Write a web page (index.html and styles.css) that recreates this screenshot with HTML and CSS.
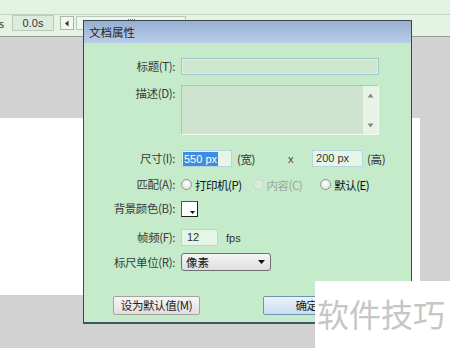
FILE: index.html
```html
<!DOCTYPE html>
<html>
<head>
<meta charset="utf-8">
<link rel="stylesheet" href="styles.css">
</head>
<body>
<div class="app">
  <div class="topstrip"></div>
  <div class="toolbar">
    <span class="tb-s">s</span>
    <span class="tb-time">0.0s</span>
    <span class="tb-arrow"><svg width="6" height="7" viewBox="0 0 6 7"><path d="M4.5 0.5 L1 3.5 L4.5 6.5 Z" fill="#333"/></svg></span>
    <span class="tb-track"><span class="grip"></span></span>
  </div>
  <div class="stage"></div>

  <div class="dialog">
    <div class="titlebar">文档属性</div>
    <div class="body">
      <div class="row r1">
        <span class="lbl">标题(T):</span>
        <span class="field f-title"></span>
      </div>
      <div class="row r2 top">
        <span class="lbl">描述(D):</span>
        <span class="textarea">
          <span class="vscroll">
            <svg width="7" height="5" viewBox="0 0 7 5"><path d="M0.5 4.5 L3.5 0.5 L6.5 4.5 Z" fill="#8a8a8a"/></svg>
            <svg width="7" height="5" viewBox="0 0 7 5"><path d="M0.5 0.5 L3.5 4.5 L6.5 0.5 Z" fill="#8a8a8a"/></svg>
          </span>
        </span>
      </div>
      <div class="row r3">
        <span class="lbl">尺寸(I):</span>
        <span class="field f-w"><span class="sel">550 px</span></span>
        <span class="unit u-w">(宽)</span>
        <span class="times">x</span>
        <span class="field f-h">200 px</span>
        <span class="unit u-h">(高)</span>
      </div>
      <div class="row r4">
        <span class="lbl">匹配(A):</span>
        <span class="radio"></span>
        <span class="opt">打印机(P)</span>
        <span class="radio disabled"></span>
        <span class="opt dis">内容(C)</span>
        <span class="radio r-def"></span>
        <span class="opt">默认(E)</span>
      </div>
      <div class="row r5">
        <span class="lbl">背景颜色(B):</span>
        <span class="swatch"><svg width="5" height="3" viewBox="0 0 5 3"><path d="M0 0 L5 0 L2.5 3 Z" fill="#111"/></svg></span>
      </div>
      <div class="row r6">
        <span class="lbl">帧频(F):</span>
        <span class="field f-fps">12</span>
        <span class="fps">fps</span>
      </div>
      <div class="row r7">
        <span class="lbl">标尺单位(R):</span>
        <span class="select"><span class="sel-text">像素</span><svg width="7" height="4" viewBox="0 0 7 4"><path d="M0 0 L7 0 L3.5 4 Z" fill="#111"/></svg></span>
      </div>
      <div class="buttons">
        <span class="btn btn-def">设为默认值(M)</span>
        <span class="btn btn-ok">确定</span>
      </div>
    </div>
  </div>

  <div class="watermark">软件技巧</div>
</div>
</body>
</html>
```

FILE: styles.css
```css
html, body {
  margin: 0;
  padding: 0;
}
body {
  font-family: "Noto Sans CJK SC", "Noto Sans", sans-serif;
  font-size: 12px;
  color: #333;
}
.app {
  position: relative;
  width: 450px;
  height: 348px;
  overflow: hidden;
  background: #d2d2d2;
}
.topstrip {
  height: 14px;
  background: #e3f3e3;
  border-bottom: 1px solid #c2d2c2;
}
.toolbar {
  height: 21px;
  background: #e4f4e4;
  border-bottom: 1px solid #8f9f93;
  display: flex;
  align-items: flex-start;
}
.tb-s {
  width: 13px;
  font-size: 11px;
  line-height: 16px;
  color: #444;
  margin-left: -1px;
}
.tb-time {
  box-sizing: border-box;
  width: 42px;
  height: 16px;
  border: 1px solid #bccabc;
  background: #dcecdc;
  font-family: "Liberation Sans", sans-serif;
  font-size: 11px;
  line-height: 14px;
  text-align: center;
  color: #333;
}
.tb-arrow {
  box-sizing: border-box;
  margin-left: 6px;
  margin-top: 1px;
  width: 14px;
  height: 14px;
  border: 1px solid #aab8aa;
  background: #f2f7f2;
  display: flex;
  align-items: center;
  justify-content: center;
}
.tb-track {
  box-sizing: border-box;
  margin-left: 2px;
  margin-top: 1px;
  width: 110px;
  height: 14px;
  border: 1px solid #bac8ba;
  background: #eef6ee;
  position: relative;
}
.grip {
  position: absolute;
  left: 51px;
  top: 2px;
  width: 7px;
  height: 1px;
  border-top: 1px dotted #777;
}
.stage {
  margin-top: 81px;
  width: 420px;
  height: 177px;
  background: #ffffff;
}

/* dialog window */
.dialog {
  position: absolute;
  left: 83px;
  top: 20px;
  width: 329px;
  height: 304px;
  box-sizing: border-box;
  border: 1px solid #3a464c;
  border-bottom: 2px solid #3d5866;
  background: #c6ebcb;
}
.titlebar {
  height: 22px;
  background: linear-gradient(#97afd2, #b8cde8);
  padding-left: 5px;
  font-size: 11.5px;
  line-height: 22px;
  color: #1e1e1e;
}
.body {
  padding-top: 15px;
}
.row {
  display: flex;
  align-items: center;
}
.row.top {
  align-items: flex-start;
}
.lbl {
  width: 91px;
  flex: none;
  text-align: right;
  margin-right: 6px;
  line-height: 17px;
  font-size: 11.5px;
  letter-spacing: -0.4px;
  color: #3a3a3a;
  white-space: nowrap;
}
.r2 { margin-top: 10px; }
.r3 { margin-top: 15px; }
.r4 { margin-top: 9px; }
.r5 { margin-top: 7px; }
.r6 { margin-top: 12px; }
.r7 { margin-top: 7px; }
.buttons {
  margin-top: 25px;
  display: flex;
}

.field {
  box-sizing: border-box;
  height: 17px;
  border: 1px solid #b4d6e0;
  background: #e6f6e6;
  font-family: "Liberation Sans", sans-serif;
  font-size: 11px;
  line-height: 15px;
  padding-left: 3px;
  color: #333;
  display: flex;
  align-items: center;
}
.f-title {
  width: 198px;
  border-color: #9ec4cc;
  background: #cde6cd;
  box-shadow: inset 0 0 0 1px #e2f2ea;
}
.textarea {
  box-sizing: border-box;
  width: 198px;
  height: 50px;
  border-top: 1px solid #b0c8b0;
  border-left: 1px solid #b0c8b0;
  border-right: 1px solid #f4fbf4;
  border-bottom: 1px solid #f4fbf4;
  background: #cfe4cf;
  display: flex;
  justify-content: flex-end;
}
.vscroll {
  width: 15px;
  background: #e8f3e8;
  display: flex;
  flex-direction: column;
  align-items: center;
  justify-content: space-between;
  padding: 7px 0 6px;
  box-sizing: border-box;
}
.f-w {
  width: 51px;
  padding-left: 1px;
}
.sel {
  background: #3d8de0;
  color: #fff;
  padding: 0 1px;
  line-height: 14px;
}
.unit {
  font-size: 11.5px;
  letter-spacing: -0.4px;
  color: #333;
}
.u-w { margin-left: 5px; }
.times {
  margin-left: 33px;
  width: 24px;
  font-family: "Liberation Sans", sans-serif;
  font-size: 11px;
  color: #444;
}
.f-h {
  width: 51px;
  padding-left: 3px;
}
.u-h { margin-left: 4px; }

.radio {
  box-sizing: border-box;
  width: 11px;
  height: 11px;
  border-radius: 50%;
  border: 1px solid #8e9a8e;
  background: radial-gradient(circle at 50% 40%, #ffffff, #d8dcd8);
  flex: none;
}
.radio.disabled {
  margin-left: 11px;
  border-color: #c8d6c8;
  background: #d8ecd8;
}
.radio.r-def {
  margin-left: 18px;
}
.opt {
  margin-left: 3px;
  font-size: 11.5px;
  letter-spacing: -0.5px;
  color: #111;
  white-space: nowrap;
}
.opt.dis {
  color: #9aa89a;
}
.swatch {
  box-sizing: border-box;
  width: 17px;
  height: 16px;
  background: #fff;
  border: 1px solid #555;
  border-right-color: #222;
  border-bottom-color: #222;
  display: flex;
  align-items: flex-end;
  justify-content: flex-end;
  padding: 0 2px 2px 0;
}
.f-fps {
  width: 37px;
  padding-left: 5px;
}
.fps {
  margin-left: 8px;
  font-family: "Liberation Sans", sans-serif;
  font-size: 11px;
  color: #333;
}
.select {
  box-sizing: border-box;
  width: 90px;
  height: 18px;
  border: 1px solid #6f6f6f;
  border-radius: 3px;
  background: linear-gradient(#f5f5f5, #dedede);
  display: flex;
  align-items: center;
  justify-content: space-between;
  padding: 0 5px 0 4px;
}
.sel-text {
  font-size: 11.5px;
  color: #111;
  line-height: 16px;
}
.btn {
  box-sizing: border-box;
  height: 19px;
  width: 87px;
  border: 1px solid #a3a3a3;
  border-radius: 2px;
  font-size: 11.5px;
  letter-spacing: -0.4px;
  line-height: 17px;
  text-align: center;
  color: #222;
}
.btn-def {
  margin-left: 29px;
  background: linear-gradient(#f6f6f6, #e0e0e0);
}
.btn-ok {
  margin-left: 63px;
  border-color: #6c95b4;
  background: linear-gradient(#e9f3fa, #c9def0);
}

.watermark {
  position: absolute;
  left: 315px;
  top: 281px;
  width: 135px;
  height: 67px;
  background: #ffffff;
  color: #c6c6c6;
  font-size: 32px;
  line-height: 64px;
  padding-left: 2px;
  box-sizing: border-box;
  white-space: nowrap;
}
```
